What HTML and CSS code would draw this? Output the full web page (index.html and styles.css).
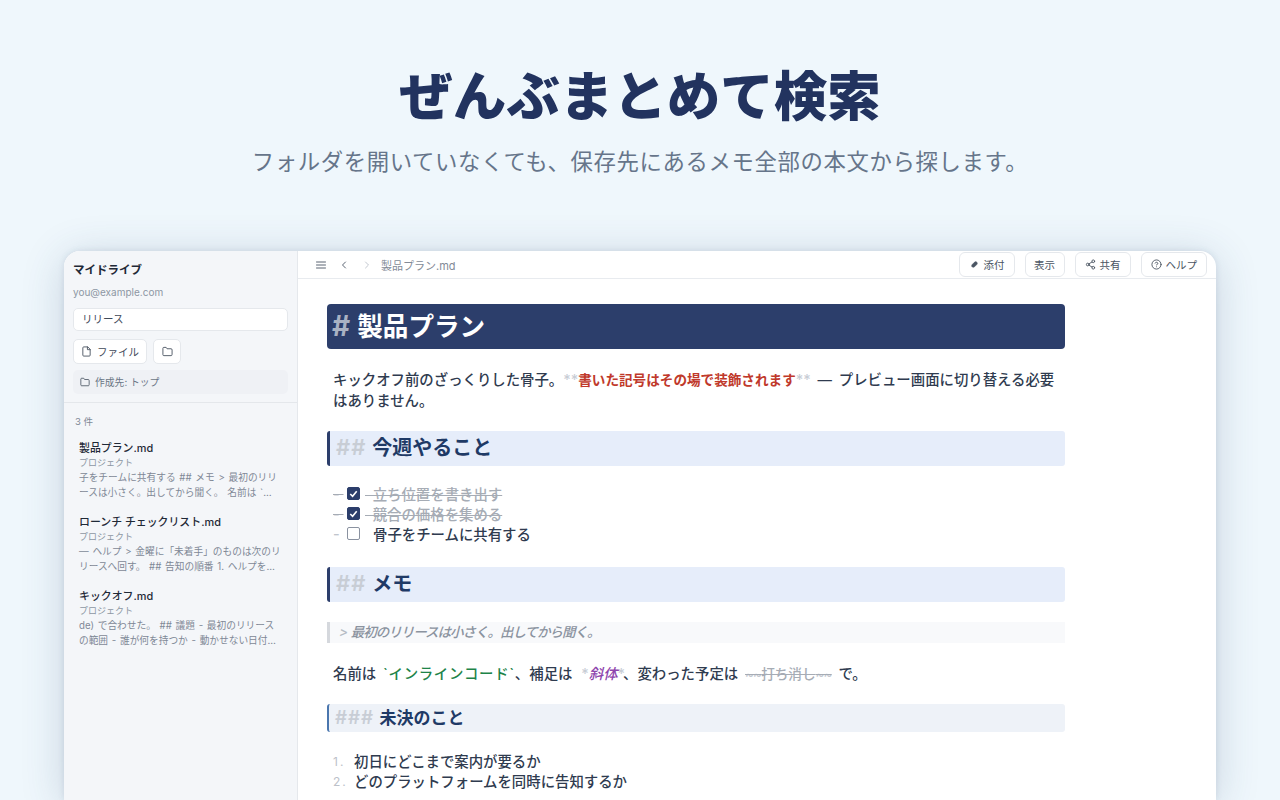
FILE: index.html
```html
<!DOCTYPE html>
<html lang="ja">
<head>
<meta charset="utf-8">
<title>ぜんぶまとめて検索</title>
<link rel="stylesheet" href="styles.css">
</head>
<body>
<header class="hero">
  <h1 class="hero-title">ぜんぶまとめて検索</h1>
  <p class="hero-sub">フォルダを開いていなくても、保存先にあるメモ全部の本文から探します。</p>
</header>
<div class="window">
  <aside class="sidebar">
    <div class="side-top">
      <div class="drive">マイドライブ</div>
      <div class="email">you@example.com</div>
      <div class="search">リリース</div>
      <div class="side-btns">
        <div class="sbtn">
          <svg class="ico" viewBox="0 0 24 24"><path d="M14 2H6a2 2 0 0 0-2 2v16a2 2 0 0 0 2 2h12a2 2 0 0 0 2-2V8z"/><path d="M14 2v6h6"/></svg>
          ファイル
        </div>
        <div class="sbtn sbtn-icon">
          <svg class="ico" viewBox="0 0 24 24"><path d="M22 19a2 2 0 0 1-2 2H4a2 2 0 0 1-2-2V5a2 2 0 0 1 2-2h5l2 3h9a2 2 0 0 1 2 2z"/></svg>
        </div>
      </div>
      <div class="dest">
        <svg class="ico ico-sm" viewBox="0 0 24 24"><path d="M22 19a2 2 0 0 1-2 2H4a2 2 0 0 1-2-2V5a2 2 0 0 1 2-2h5l2 3h9a2 2 0 0 1 2 2z"/></svg>
        作成先: トップ
      </div>
    </div>
    <div class="count">3 件</div>
    <div class="result">
      <div class="r-name">製品プラン.md</div>
      <div class="r-path">プロジェクト</div>
      <div class="r-snip">子をチームに共有する ## メモ &gt; 最初のリリースは小さく。出してから聞く。 名前は `…</div>
    </div>
    <div class="result">
      <div class="r-name">ローンチ チェックリスト.md</div>
      <div class="r-path">プロジェクト</div>
      <div class="r-snip">— ヘルプ &gt; 金曜に「未着手」のものは次のリリースへ回す。 ## 告知の順番 1. ヘルプを…</div>
    </div>
    <div class="result">
      <div class="r-name">キックオフ.md</div>
      <div class="r-path">プロジェクト</div>
      <div class="r-snip">de) で合わせた。 ## 議題 - 最初のリリースの範囲 - 誰が何を持つか - 動かせない日付…</div>
    </div>
  </aside>
  <main class="main">
    <div class="toolbar">
      <div class="tb-left">
        <svg class="tb-ico" viewBox="0 0 24 24"><path d="M3 6h18M3 12h18M3 18h18"/></svg>
        <svg class="tb-ico" viewBox="0 0 24 24"><path d="M15 18l-6-6 6-6"/></svg>
        <svg class="tb-ico tb-off" viewBox="0 0 24 24"><path d="M9 18l6-6-6-6"/></svg>
        <span class="crumb">製品プラン.md</span>
      </div>
      <div class="tb-right">
        <div class="tbtn"><svg class="ico ico-clip" viewBox="-5 -5 34 34"><path d="M5 19c-2-2-2-5 0-7l7-7c2-2 5-2 7 0s2 5 0 7l-7 7c-2 2-5 2-7 0z"/></svg>添付</div>
        <div class="tbtn tbtn-text">表示</div>
        <div class="tbtn"><svg class="ico" viewBox="0 0 24 24"><circle cx="18" cy="5" r="3"/><circle cx="6" cy="12" r="3"/><circle cx="18" cy="19" r="3"/><path d="M8.6 13.5l6.8 4M15.4 6.5l-6.8 4"/></svg>共有</div>
        <div class="tbtn"><svg class="ico" viewBox="0 0 24 24"><circle cx="12" cy="12" r="10"/><path d="M9.1 9a3 3 0 0 1 5.8 1c0 2-3 3-3 3M12 17h.01"/></svg>ヘルプ</div>
      </div>
    </div>
    <article class="doc">
      <h1 class="h1"><span class="mk1">#</span> 製品プラン</h1>
      <p class="para">キックオフ前のざっくりした骨子。<span class="mk">**</span><b class="red">書いた記号はその場で装飾されます</b><span class="mk">**</span> <span class="emdash">—</span> プレビュー画面に切り替える必要はありません。</p>
      <h2 class="h2"><span class="mk2">##</span> 今週やること</h2>
      <ul class="tasks">
        <li class="task done"><span class="dash">- </span><span class="cb on"><svg viewBox="0 0 24 24"><path d="M5 13l5 5 9-11"/></svg></span><span class="t">  立ち位置を書き出す</span></li>
        <li class="task done"><span class="dash">- </span><span class="cb on"><svg viewBox="0 0 24 24"><path d="M5 13l5 5 9-11"/></svg></span><span class="t">  競合の価格を集める</span></li>
        <li class="task"><span class="dash">- </span><span class="cb"></span><span class="t">骨子をチームに共有する</span></li>
      </ul>
      <h2 class="h2 h2b"><span class="mk2">##</span> メモ</h2>
      <blockquote class="quote"><span class="q-mk">&gt;</span> 最初のリリースは小さく。出してから聞く。</blockquote>
      <p class="para para2">名前は <span class="code">`インラインコード`</span>、補足は <span class="em"><span class="mk">*</span><i>斜体</i><span class="mk">*</span></span>、変わった予定は <s class="strike"><span class="tilde">~~</span>打ち消し<span class="tilde">~~</span></s> で。</p>
      <h3 class="h3"><span class="mk2">###</span> 未決のこと</h3>
      <ol class="nums">
        <li><span class="n">1.</span>初日にどこまで案内が要るか</li>
        <li><span class="n">2.</span>どのプラットフォームを同時に告知するか</li>
      </ol>
    </article>
  </main>
</div>
</body>
</html>
```

FILE: styles.css
```css
html, body { margin: 0; padding: 0; height: 800px; overflow: hidden; }
body {
  background: #eff7fc;
  font-family: Inter, "Noto Sans CJK JP", "Liberation Sans", sans-serif;
  color: #2b3648;
}
.hero { text-align: center; padding-top: 61px; }
.hero-title {
  margin: 0;
  font-size: 53.5px;
  line-height: 72px;
  font-weight: 800;
  color: #22335f;
}
.hero-sub {
  margin: 14px 0 0;
  font-size: 22.4px;
  line-height: 30px;
  letter-spacing: .6px;
  color: #66758a;
}
.window {
  margin: 74px 64px 0;
  height: 549px;
  display: flex;
  background: #fff;
  border-radius: 16px 16px 0 0;
  overflow: hidden;
  box-shadow: 0 0 6px rgba(40, 70, 110, .12), 0 6px 44px rgba(40, 70, 110, .2);
}
.sidebar {
  width: 233px;
  flex: none;
  background: #f4f6f9;
  border-right: 1px solid #e5e8ec;
}
.side-top { padding: 11px 9px 8px; border-bottom: 1px solid #e4e7eb; }
.drive { font-size: 11.5px; font-weight: 700; line-height: 16px; color: #1f2937; }
.email { font-size: 10px; line-height: 14px; margin-top: 7px; color: #8d96a3; }
.search {
  margin-top: 9px;
  height: 21px;
  line-height: 21px;
  padding: 0 8px;
  font-size: 10.5px;
  color: #3f4a5a;
  background: #fff;
  border: 1px solid #e5e8ec;
  border-radius: 5px;
}
.side-btns { display: flex; gap: 6px; margin-top: 8px; }
.sbtn {
  display: flex;
  align-items: center;
  gap: 5px;
  height: 23px;
  padding: 0 7px;
  font-size: 10.5px;
  color: #3f4a5a;
  background: #fff;
  border: 1px solid #e5e8ec;
  border-radius: 5px;
}
.sbtn-icon { padding: 0 7.5px; }
.ico {
  width: 11px;
  height: 11px;
  fill: none;
  stroke: #4b5563;
  stroke-width: 2;
  stroke-linecap: round;
  stroke-linejoin: round;
  flex: none;
}
.ico-sm { width: 10px; height: 10px; }
.ico-clip { fill: #4b5563; }
.dest {
  display: flex;
  align-items: center;
  gap: 5px;
  margin-top: 6px;
  height: 24px;
  padding: 0 7px;
  font-size: 9.8px;
  color: #6b7685;
  background: #eff1f5;
  border-radius: 5px;
}
.count { padding: 12px 11px 0; margin-bottom: -3px; font-size: 9.5px; line-height: 14px; color: #7f8896; }
.result { padding: 14px 15px 0; }
.r-name { font-size: 10.9px; line-height: 16px; font-weight: 500; color: #1f2937; }
.r-path { font-size: 9px; line-height: 14px; color: #8d96a3; }
.r-snip { font-size: 9.7px; line-height: 15px; word-spacing: 1px; color: #7f8896; }
.main { flex: 1; min-width: 0; display: flex; flex-direction: column; }
.toolbar {
  height: 27px;
  flex: none;
  display: flex;
  align-items: center;
  justify-content: space-between;
  padding: 0 9px 0 17px;
  border-bottom: 1px solid #e8ebef;
}
.tb-left { display: flex; align-items: center; gap: 11px; }
.tb-ico {
  width: 12px;
  height: 12px;
  fill: none;
  stroke: #5b6573;
  stroke-width: 2;
  stroke-linecap: round;
  stroke-linejoin: round;
}
.tb-off { stroke: #c3c8d0; }
.crumb { font-size: 11px; color: #838b97; margin-left: -3px; }
.tb-right { display: flex; gap: 10px; }
.tbtn {
  display: flex;
  align-items: center;
  gap: 4px;
  height: 23px;
  padding: 0 9px;
  font-size: 10.5px;
  color: #4b5563;
  background: #fff;
  border: 1px solid #e5e8ec;
  border-radius: 6px;
}
.tbtn-text { padding: 0 8.5px; }
.doc { width: 738px; padding: 25px 0 0 29px; font-size: 14.4px; font-weight: 500; color: #2f3b4f; }
.h1 {
  margin: 0;
  height: 45px;
  line-height: 45px;
  padding: 0 5px;
  font-size: 25.6px;
  font-weight: 700;
  color: #fff;
  background: #2c3e6b;
  border-radius: 4px;
}
.mk1 { color: #a9b2c3; font-size: 28px; margin-right: 1px; }
.mk, .mk2 { color: #c8cdd5; }
.mk2 { letter-spacing: 1px; font-size: 1.1em; line-height: 1; margin-right: 1px; }
.para { margin: 20px 0 0; padding: 0 6px; line-height: 21px; word-spacing: 3px; }
.red { color: #c0392b; font-weight: 600; font-size: 13.6px; line-height: 1; }
.emdash { font-weight: 400; }
.h2 {
  margin: 20px 0 0;
  height: 35px;
  line-height: 35px;
  padding: 0 6px;
  font-size: 20px;
  font-weight: 600;
  color: #1f3a66;
  background: #e6edfa;
  border-left: 3px solid #2c3e6b;
  border-radius: 3px;
}
.h2b { margin-top: 24px; }
.tasks { list-style: none; margin: 17px 0 0; padding: 0 6px; }
.task { display: flex; align-items: center; height: 20px; white-space: pre; }
.dash { color: #c0c5cd; width: 14px; }
.done .dash { text-decoration: line-through; color: #a6acb5; }
.cb {
  width: 13px;
  height: 13px;
  box-sizing: border-box;
  border: 1px solid #8a92a0;
  border-radius: 2px;
  margin-right: 13px;
  background: #fff;
}
.cb.on { background: #2c3e6b; border-color: #2c3e6b; margin-right: 5px; }
.cb svg { display: block; width: 100%; height: 100%; fill: none; stroke: #fff; stroke-width: 3.5; }
.done .t { color: #a6acb5; text-decoration: line-through; }
.quote {
  margin: 20px 0 0;
  height: 21px;
  line-height: 21px;
  padding: 0 9px;
  font-size: 13.5px;
  letter-spacing: -1px;
  font-style: italic;
  color: #8b939f;
  background: #f8f9fb;
  border-left: 3px solid #d5d8dd;
}
.q-mk { color: #b6bcc5; letter-spacing: 0; }
.para2 { margin-top: 20px; }
.code { color: #1e8449; letter-spacing: .7px; }
.em { color: #8e44ad; margin: 0 -2px 0 2px; }
.strike { color: #a6acb5; font-size: 13.6px; line-height: 1; }
.tilde { color: #c3c8d0; letter-spacing: -1px; }
.h3 {
  margin: 20px 0 0;
  height: 28px;
  line-height: 28px;
  padding: 0 6px;
  font-size: 17px;
  font-weight: 600;
  color: #1f3a66;
  background: #eef2f8;
  border-left: 2.5px solid #4a76ae;
  border-radius: 3px;
}
.nums { list-style: none; margin: 20px 0 0; padding: 0 6px; }
.nums li { height: 20px; line-height: 20px; display: flex; }
.n { width: 21px; color: #bcc1c9; font-weight: 400; font-size: 12px; letter-spacing: 2px; }
```
